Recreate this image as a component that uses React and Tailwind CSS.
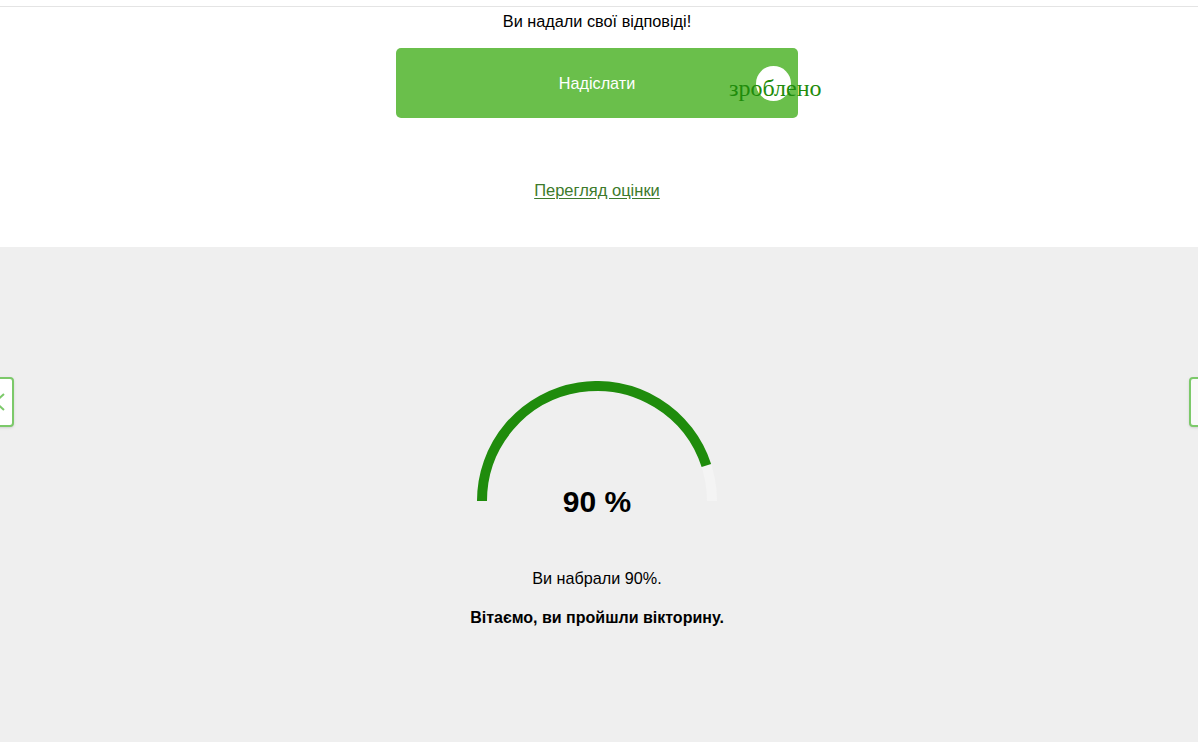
import React from 'react'

function Gauge({ percent }) {
  // half circle, r=115, stroke 10
  const r = 115
  const cx = 125
  const cy = 120
  const a = Math.PI * (percent / 100)
  const ex = cx - r * Math.cos(a)
  const ey = cy - r * Math.sin(a)
  return (
    <svg width="250" height="125" viewBox="0 0 250 125">
      <path d={`M ${cx - r} ${cy} A ${r} ${r} 0 0 1 ${cx + r} ${cy}`} fill="none" stroke="#f4f4f4" strokeWidth="10" />
      <path d={`M ${cx - r} ${cy} A ${r} ${r} 0 0 1 ${ex} ${ey}`} fill="none" stroke="#1f8c0c" strokeWidth="10" />
    </svg>
  )
}

export default function App() {
  return (
    <div className="w-[1198px] h-[742px] overflow-hidden bg-white flex flex-col" style={{ fontFamily: '"Liberation Sans", Arial, sans-serif' }}>
      <div className="h-[6px] shrink-0" />
      <div className="border-t border-[#e4e4e4] h-[241px] shrink-0 flex flex-col items-center pr-[4px]">
        <p className="mt-[3px] text-[16.3px] leading-[22px] text-black">Ви надали свої відповіді!</p>
        <div className="relative mt-[16px] w-[402px] h-[70px] rounded-[5px] bg-[#6abf4b] flex items-center justify-center">
          <span className="text-white text-[16.2px]">Надіслати</span>
          <div className="absolute left-[360px] top-[18px] w-[35px] h-[35px] rounded-full bg-white" />
          <span className="absolute left-[333px] top-[25px] text-[#1f8c0c] text-[24px] leading-[30px]" style={{ fontFamily: '"Liberation Serif", "Times New Roman", serif' }}>зроблено</span>
        </div>
        <a href="#" className="mt-[61px] text-[16.5px] leading-[22px] text-[#3d7a2b] underline underline-offset-2">Перегляд оцінки</a>
      </div>
      <div className="relative flex-1 bg-[#efefef] flex flex-col items-center pr-[4px]">
        <div className="absolute left-[-30px] top-[130px] w-[44px] h-[50px] rounded-[4px] border-2 border-[#7cc96a] bg-white shadow-sm flex items-center justify-end pr-[4px]">
          <svg width="14" height="20" viewBox="0 0 14 20"><path d="M10 2 L1 10 L10 18" fill="none" stroke="#7cc96a" strokeWidth="2" /></svg>
        </div>
        <div className="absolute left-[1189px] top-[130px] w-[44px] h-[50px] rounded-[4px] border-2 border-[#7cc96a] bg-[#f9f9f9] shadow-sm" />
        <div className="relative mt-[134px] w-[250px] h-[125px]">
          <Gauge percent={90} />
          <div className="absolute left-0 right-0 top-[101px] text-center text-[30px] leading-[40px] font-bold text-black">90 %</div>
        </div>
        <p className="mt-[61px] text-[16.2px] leading-[22px] text-black">Ви набрали 90%.</p>
        <p className="mt-[18px] text-[16px] leading-[22px] font-bold text-black">Вітаємо, ви пройшли вікторину.</p>
      </div>
    </div>
  )
}
